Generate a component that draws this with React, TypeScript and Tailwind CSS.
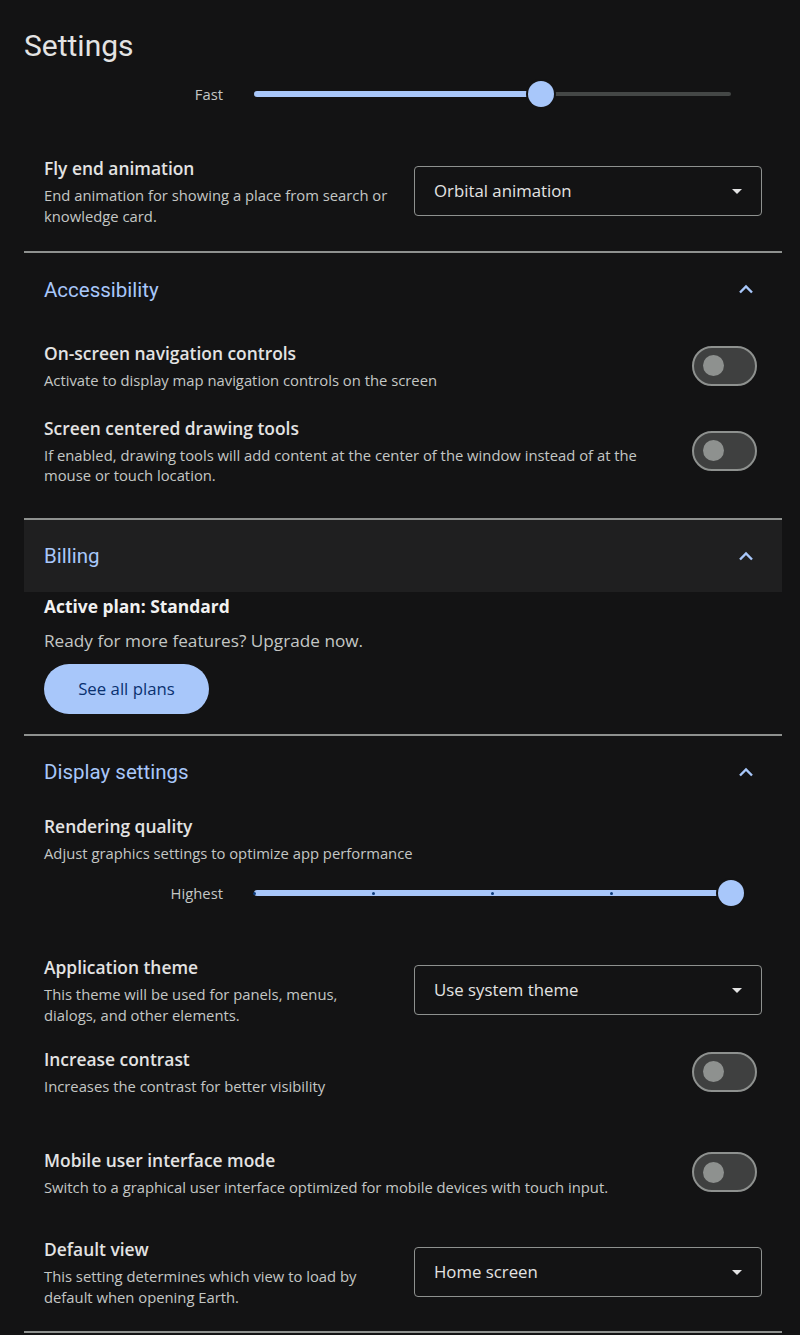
const body = { fontFamily: "'Open Sans', Roboto, sans-serif" };
const heading = { fontFamily: "Roboto, 'Open Sans', sans-serif" };

function Chevron() {
  return (
    <svg width="16" height="10" viewBox="0 0 16 10" fill="none">
      <polyline points="2,8.5 8,2.5 14,8.5" stroke="#a8c7fa" strokeWidth="2.4" />
    </svg>
  );
}

function Toggle() {
  return (
    <div className="w-[65px] h-[40px] mr-[5px] shrink-0 rounded-full border-2 border-[#8e918f] bg-[#3f4040] flex items-center pl-[9px]">
      <div className="w-[21px] h-[21px] rounded-full bg-[#8e918f]" />
    </div>
  );
}

function Select({ value }: { value: string }) {
  return (
    <div className="w-[348px] h-[50px] shrink-0 rounded-[4px] border border-[#8e918f] flex items-center justify-between pl-[19px] pr-[19px]">
      <span className="text-[16.8px] text-[#e3e3e3]">{value}</span>
      <svg width="10" height="5" viewBox="0 0 10 5">
        <polygon points="0,0 10,0 5,5" fill="#e3e3e3" />
      </svg>
    </div>
  );
}

function SectionHeader({ title, shaded }: { title: string; shaded?: boolean }) {
  return (
    <div
      className={
        "h-[72px] flex items-center justify-between pl-5 pr-[28px] " +
        (shaded ? "bg-[#1f1f20]" : "")
      }
    >
      <span className="pt-[2px] text-[20.5px] text-[#a8c7fa]" style={heading}>
        {title}
      </span>
      <Chevron />
    </div>
  );
}

function Divider() {
  return <div className="h-[2px] bg-[#8e918f]" />;
}

function Setting({
  title,
  desc,
  children,
  className = "",
}: {
  title: string;
  desc: React.ReactNode;
  children?: React.ReactNode;
  className?: string;
}) {
  return (
    <div className={"flex items-center justify-between pl-5 pr-5 gap-6 " + className}>
      <div>
        <div className="text-[17.4px] leading-[24px] font-semibold text-[#e3e3e3]">{title}</div>
        <div className="mt-[5px] text-[14.8px] leading-[20.5px] text-[#c4c7c5]">{desc}</div>
      </div>
      {children}
    </div>
  );
}

function Slider({
  label,
  value,
  steps,
  className = "",
}: {
  label: string;
  value: number;
  steps?: number;
  className?: string;
}) {
  const ticks = steps ? Array.from({ length: steps + 1 }, (_, i) => i / steps) : [];
  return (
    <div className={"flex items-center h-[30px] pl-5 " + className}>
      <div className="w-[179px] text-right text-[14.8px] text-[#c4c7c5]">{label}</div>
      <div className="relative ml-[31px] w-[477px] h-[30px]">
        <div className="absolute left-0 right-0 top-[13px] h-[4px] rounded-full bg-[#444746]" />
        <div
          className="absolute left-0 top-[12px] h-[6px] rounded-full bg-[#a8c7fa]"
          style={{ width: `${value * 100}%` }}
        />
        {ticks.map((t) => (
          <div
            key={t}
            className="absolute top-[13.5px] w-[3px] h-[3px] rounded-full bg-[#0b3a7a]"
            style={{ left: `calc(${t * 100}% - 1.5px)` }}
          />
        ))}
        <div
          className="absolute top-[2px] w-[26px] h-[26px] rounded-full bg-[#a8c7fa] ring-2 ring-[#131314]"
          style={{ left: `calc(${value * 100}% - 13px)` }}
        />
      </div>
    </div>
  );
}

export default function App() {
  return (
    <div className="min-h-screen w-full bg-[#131314] text-[#e3e3e3]" style={body}>
      <div className="pl-6 pr-[18px] pb-6">
        <h1 className="pt-[26px] text-[30px] leading-[40px] text-[#e3e3e3]" style={heading}>
          Settings
        </h1>

        <Slider label="Fast" value={0.602} className="mt-[13px]" />

        <Setting
          className="mt-[47px] mb-[25px]"
          title="Fly end animation"
          desc={
            <>
              End animation for showing a place from search or
              <br />
              knowledge card.
            </>
          }
        >
          <Select value="Orbital animation" />
        </Setting>

        <Divider />
        <SectionHeader title="Accessibility" />

        <Setting
          className="mt-[16px]"
          title="On-screen navigation controls"
          desc="Activate to display map navigation controls on the screen"
        >
          <Toggle />
        </Setting>

        <Setting
          className="mt-[25px] mb-[32px]"
          title="Screen centered drawing tools"
          desc={
            <>
              If enabled, drawing tools will add content at the center of the window instead of at the
              <br />
              mouse or touch location.
            </>
          }
        >
          <Toggle />
        </Setting>

        <Divider />
        <SectionHeader title="Billing" shaded />

        <div className="pl-5 pt-[2px] pb-[20px]">
          <div className="text-[17.4px] leading-[24px] font-bold text-[#f1f1f1]">Active plan: Standard</div>
          <div className="mt-[11px] text-[17.2px] leading-[24px] text-[#c4c7c5]">
            Ready for more features? Upgrade now.
          </div>
          <button className="mt-[11px] w-[165px] h-[50px] rounded-full bg-[#a8c7fa] text-[16.8px] text-[#0a3170]">
            See all plans
          </button>
        </div>

        <Divider />
        <SectionHeader title="Display settings" />

        <Setting
          className="mt-[6px]"
          title="Rendering quality"
          desc="Adjust graphics settings to optimize app performance"
        />

        <Slider label="Highest" value={1} steps={4} className="mt-[15px]" />

        <Setting
          className="mt-[47px]"
          title="Application theme"
          desc={
            <>
              This theme will be used for panels, menus,
              <br />
              dialogs, and other elements.
            </>
          }
        >
          <Select value="Use system theme" />
        </Setting>

        <Setting
          className="mt-[22px]"
          title="Increase contrast"
          desc="Increases the contrast for better visibility"
        >
          <Toggle />
        </Setting>

        <Setting
          className="mt-[51px]"
          title="Mobile user interface mode"
          desc="Switch to a graphical user interface optimized for mobile devices with touch input."
        >
          <Toggle />
        </Setting>

        <Setting
          className="mt-[40px] mb-[24px]"
          title="Default view"
          desc={
            <>
              This setting determines which view to load by
              <br />
              default when opening Earth.
            </>
          }
        >
          <Select value="Home screen" />
        </Setting>

        <Divider />
      </div>
    </div>
  );
}
